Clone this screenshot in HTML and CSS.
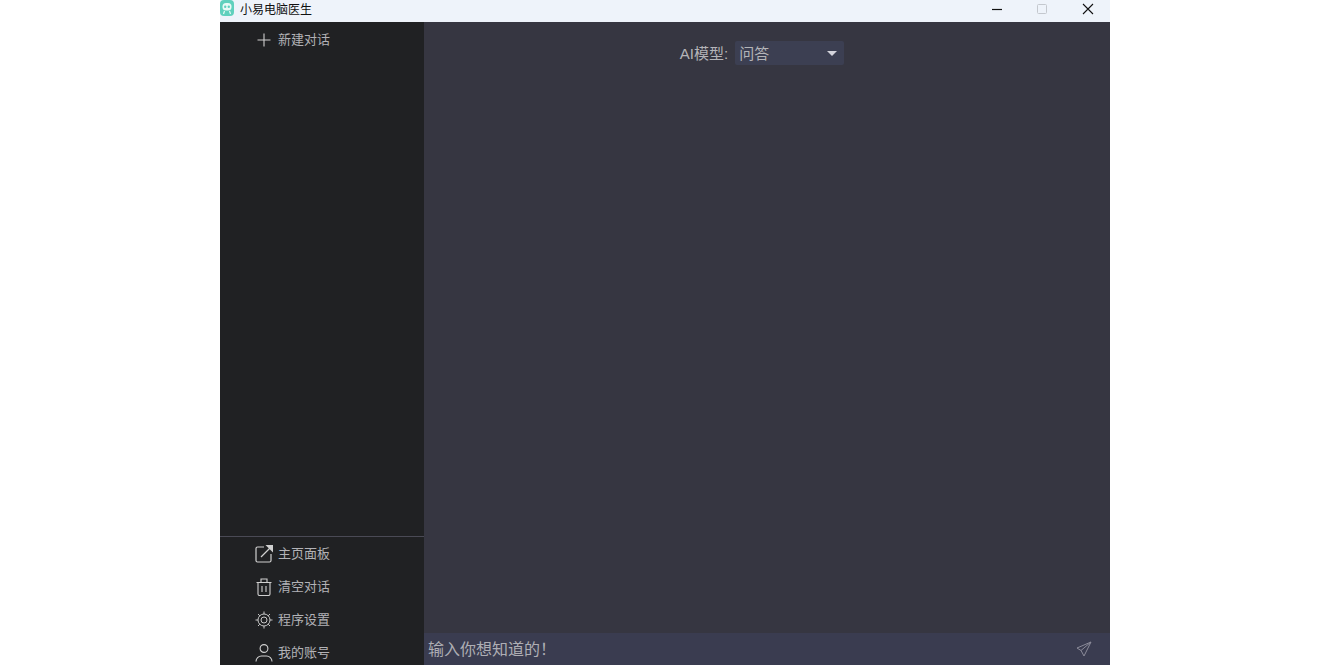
FILE: index.html
```html
<!DOCTYPE html>
<html lang="zh">
<head>
<meta charset="utf-8">
<title>小易电脑医生</title>
<link rel="stylesheet" href="styles.css">
</head>
<body>
<div class="app">
  <header class="titlebar">
    <div class="brand">
      <svg class="logo" viewBox="0 0 14 16" width="14" height="16"><rect x="0" y="0" width="14" height="16" rx="4" fill="#5fd0bd"/><rect x="2.500" y="3" width="9" height="7.500" rx="3.500" fill="#e8faf6"/><circle cx="5.200" cy="6.800" r="1.200" fill="#5fd0bd"/><circle cx="8.800" cy="6.800" r="1.200" fill="#5fd0bd"/><path d="M4.500 11l-1 3M9.500 11l1 3" stroke="#e8faf6" stroke-width="1.200"/></svg>
      <span class="apptitle">小易电脑医生</span>
    </div>
    <div class="winctl">
      <svg class="ctl" viewBox="0 0 46 18" width="46" height="18"><path d="M20 9.500h10" stroke="#111" stroke-width="1.200"/></svg>
      <svg class="ctl" viewBox="0 0 46 18" width="46" height="18"><rect x="19.500" y="4.500" width="9" height="9" rx="1" fill="none" stroke="#c4c8ce"/></svg>
      <svg class="ctl" viewBox="0 0 46 18" width="46" height="18"><path d="M19 4l10 10M29 4l-10 10" stroke="#111" stroke-width="1.100"/></svg>
    </div>
  </header>
  <div class="body">
    <aside class="sidebar">
      <div class="side-top">
        <div class="item">
          <svg class="ico" viewBox="0 0 18 18" width="18" height="18"><path d="M9 2.500v13M2.500 9h13" fill="none" stroke="#d0d0d0" stroke-width="1.100"/></svg>
          <span class="label">新建对话</span>
        </div>
      </div>
      <div class="side-bottom">
        <div class="item">
          <svg class="ico" viewBox="0 0 18 18" width="18" height="18"><path d="M9 2H2.500A1.500 1.500 0 0 0 1 3.500v12A1.500 1.500 0 0 0 2.500 17h12a1.500 1.500 0 0 0 1.500-1.500V9" fill="none" stroke="#d0d0d0" stroke-width="1.200"/><path d="M6 12L15.500 2.500" stroke="#d0d0d0" stroke-width="1.200"/><path d="M10.500 0h7.500v7.500z" fill="#d0d0d0"/></svg>
          <span class="label">主页面板</span>
        </div>
        <div class="item">
          <svg class="ico" viewBox="0 0 18 18" width="18" height="18"><path d="M1.500 4.500h15M6 4.500V1h6v3.500M3 4.500V16a1.500 1.500 0 0 0 1.500 1.500h9A1.500 1.500 0 0 0 15 16V4.500M7 8v6M11 8v6" fill="none" stroke="#d0d0d0" stroke-width="1.100"/></svg>
          <span class="label">清空对话</span>
        </div>
        <div class="item">
          <svg class="ico" viewBox="0 0 18 18" width="18" height="18"><circle cx="9" cy="9" r="3" fill="none" stroke="#c8c8c8" stroke-width="1"/><circle cx="9" cy="9" r="6" fill="none" stroke="#c8c8c8" stroke-width="1"/><path d="M9 .500v2.500M9 15v2.500M.500 9H3M15 9h2.500M3 3l1.800 1.800M13.200 13.200L15 15M15 3l-1.800 1.800M4.800 13.200L3 15" stroke="#c8c8c8" stroke-width="1"/></svg>
          <span class="label">程序设置</span>
        </div>
        <div class="item">
          <svg class="ico" viewBox="0 0 18 18" width="18" height="18"><circle cx="9" cy="4.500" r="3.900" fill="none" stroke="#d0d0d0" stroke-width="1.100"/><path d="M1 17.500a5.500 5.500 0 0 1 5.500-5.500h5a5.500 5.500 0 0 1 5.500 5.500" fill="none" stroke="#d0d0d0" stroke-width="1.100"/></svg>
          <span class="label">我的账号</span>
        </div>
      </div>
    </aside>
    <main class="main">
      <div class="model-row">
        <span class="model-label">AI模型:</span>
        <div class="select">
          <span class="select-text">问答</span>
          <span class="caret"></span>
        </div>
      </div>
      <div class="chat"></div>
      <div class="inputbar">
        <span class="placeholder">输入你想知道的！</span>
        <svg class="send" viewBox="0 0 16 16" width="16" height="16"><path d="M15 1L1 7l4 2.500L8 15zM15 1L5 9.500" fill="none" stroke="#8b8b99" stroke-width="1"/></svg>
      </div>
    </main>
  </div>
</div>
</body>
</html>
```
FILE: styles.css
```css
* { box-sizing: border-box; }
html, body { margin: 0; height: 100%; background: #fff; overflow: hidden; }
body { font-family: "Noto Sans CJK SC", "Liberation Sans", sans-serif; }
.app { width: 890px; height: 665px; margin: 0 auto; display: flex; flex-direction: column; overflow: hidden; }
.titlebar { height: 22px; background: #eef3fa; display: flex; justify-content: space-between; align-items: flex-start; flex: none; }
.brand { display: flex; align-items: flex-start; gap: 6px; }
.logo { display: block; }
.apptitle { font-size: 12px; color: #111; line-height: 17px; }
.winctl { display: flex; align-items: flex-start; }
.ctl { display: block; }
.body { flex: 1; display: flex; min-height: 0; }
.sidebar { width: 204px; flex: none; background: #202123; display: flex; flex-direction: column; justify-content: space-between; }
.side-top { padding-top: 1px; }
.side-bottom { border-top: 1px solid #4a4a55; margin-bottom: -4px; }
.item { height: 33px; display: flex; align-items: center; gap: 5px; padding-left: 35px; font-size: 13px; color: #b2b2b6; }
.label { margin-bottom: 2px; }
.ico { display: block; flex: none; }
.main { flex: 1; min-width: 0; background: #363641; display: flex; flex-direction: column; }
.model-row { display: flex; justify-content: center; align-items: center; gap: 7px; padding-top: 19px; margin-left: -10px; }
.model-label { font-size: 15px; color: #b4b4b8; font-family: "Liberation Sans", "Noto Sans CJK SC", sans-serif; margin-bottom: 2px; }
.select { width: 109px; height: 24px; background: #3c3f52; border-radius: 2px; display: flex; align-items: center; justify-content: space-between; padding: 0 7px 0 4px; font-size: 15px; color: #b4b4b8; }
.select-text { margin-bottom: 2px; }
.caret { width: 0; height: 0; border-left: 5px solid transparent; border-right: 5px solid transparent; border-top: 5px solid #d4d4dc; }
.chat { flex: 1; }
.inputbar { height: 32px; background: #3a3c50; display: flex; align-items: center; justify-content: space-between; padding: 0 18px 0 4px; flex: none; }
.placeholder { font-size: 16px; color: #aeaeb4; margin-bottom: 2px; }
.send { display: block; }
```
